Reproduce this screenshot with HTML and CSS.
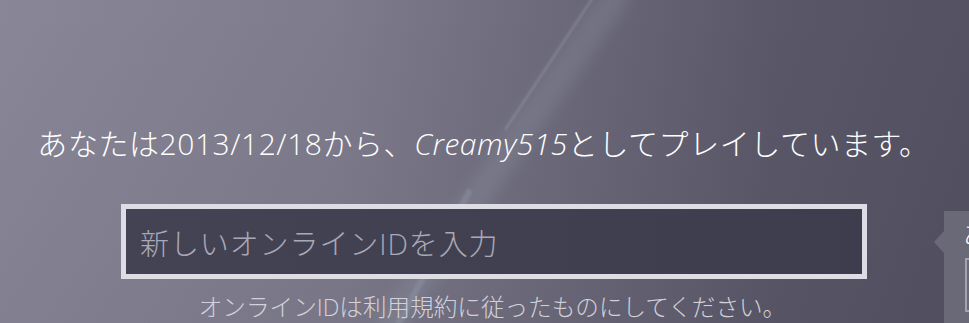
FILE: index.html
```html
<!DOCTYPE html>
<html lang="ja">
<head>
    <meta charset="UTF-8">
    <title>オンラインID</title>
    <link rel="stylesheet" href="styles.css">
</head>
<body>
    <svg class="streak" width="969" height="323" viewBox="0 0 969 323">
        <defs>
            <filter id="soft"><feGaussianBlur stdDeviation="7"/></filter>
            <filter id="thin"><feGaussianBlur stdDeviation="1"/></filter>
        </defs>
        <path d="M620 -10 L385 330" stroke="#9aa3b4" stroke-width="28" opacity="0.2" filter="url(#soft)"/>
        <path d="M598 -10 L505 130" stroke="#a9b0c0" stroke-width="2" opacity="0.35" filter="url(#thin)"/>
        <path d="M470 190 L395 330" stroke="#a7b3c0" stroke-width="6" opacity="0.22" filter="url(#thin)"/>
    </svg>

    <div class="screen">
        <div class="message">あなたは2013/12/18から、<em>Creamy515</em>としてプレイしています。</div>
        <div class="field">
            <span class="placeholder">新しいオンラインIDを入力</span>
        </div>
        <div class="note">オンラインIDは利用規約に従ったものにしてください。</div>
    </div>

    <div class="side-panel">
        <div class="side-char">あ</div>
        <div class="side-box"></div>
    </div>
</body>
</html>
```

FILE: styles.css
```css
body {
    margin: 0;
    width: 969px;
    height: 323px;
    overflow: hidden;
    position: relative;
    background:
        linear-gradient(180deg, rgba(0,0,0,0) 0%, rgba(20,18,40,0.06) 100%),
        linear-gradient(90deg, #898797 0%, #7e7c8c 35%, #6a6878 60%, #5a5868 80%, #545262 100%);
    font-family: "Open Sans", "Noto Sans CJK JP", sans-serif;
    font-weight: 300;
    color: #fff;
}
.streak {
    position: absolute;
    left: 0;
    top: 0;
    pointer-events: none;
}
.screen {
    position: relative;
    display: flex;
    flex-direction: column;
    align-items: center;
    padding-top: 122px;
}
.message {
    font-size: 30px;
    line-height: 44px;
    letter-spacing: 0.55px;
    white-space: nowrap;
    margin-right: 2px;
}
.message em {
    font-style: italic;
}
.field {
    box-sizing: border-box;
    width: 746px;
    height: 75px;
    margin-top: 38px;
    margin-left: 19px;
    border: 5px solid #dedde6;
    background: linear-gradient(90deg, #444353 0%, #3e3d4d 100%);
    display: flex;
    align-items: center;
    padding-left: 14px;
}
.placeholder {
    font-size: 29px;
    letter-spacing: 0.9px;
    color: #a9a8b6;
    white-space: nowrap;
}
.note {
    font-size: 23.6px;
    line-height: 34px;
    margin-top: 11px;
    margin-left: 16px;
    color: #d2d1da;
    white-space: nowrap;
}
.side-panel {
    position: absolute;
    left: 944px;
    top: 211px;
    width: 40px;
    height: 112px;
    background: #6a6978;
}
.side-panel::before {
    content: "";
    position: absolute;
    left: -10px;
    top: 20px;
    border-top: 11px solid transparent;
    border-bottom: 11px solid transparent;
    border-right: 10px solid #6a6978;
}
.side-char {
    margin-left: 19px;
    margin-top: 8px;
    font-size: 26px;
    line-height: 30px;
    color: #fff;
}
.side-box {
    margin-left: 21px;
    margin-top: 9px;
    height: 50px;
    border: 2px solid #a3a2ae;
}
```
